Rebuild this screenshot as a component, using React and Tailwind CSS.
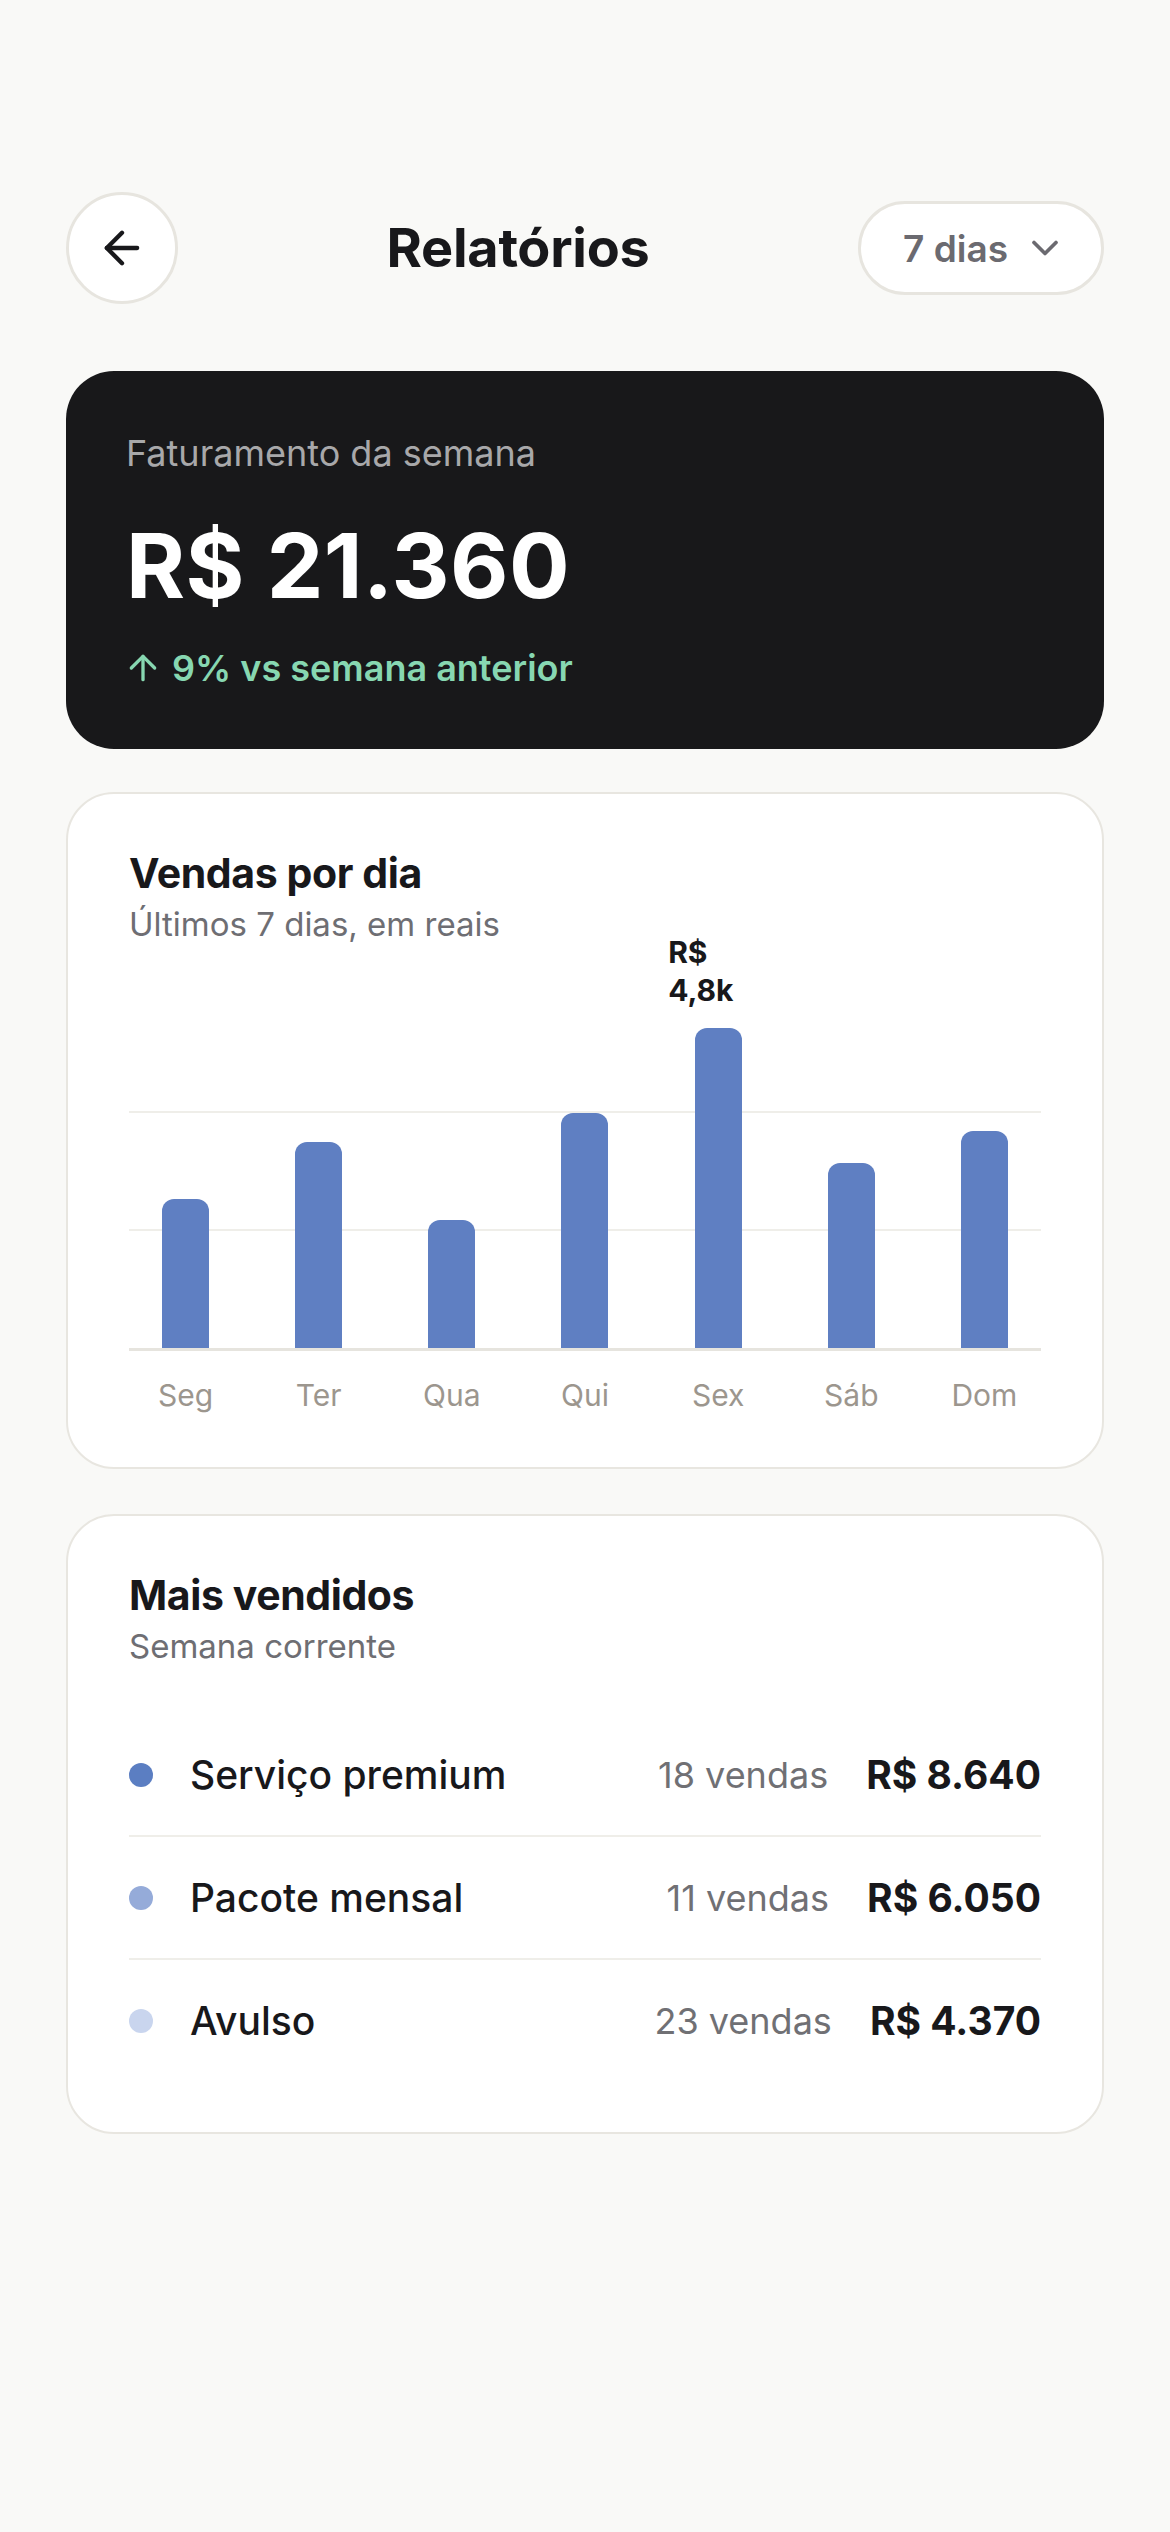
import React from "react";
import { ArrowLeft, ChevronDown, ArrowUp } from "lucide-react";

const bars = [
  { d: "Seg", h: 149 },
  { d: "Ter", h: 206 },
  { d: "Qua", h: 128 },
  { d: "Qui", h: 235 },
  { d: "Sex", h: 320, label: "R$ 4,8k" },
  { d: "Sáb", h: 185 },
  { d: "Dom", h: 217 },
];

const items = [
  { name: "Serviço premium", sales: "18 vendas", price: "R$ 8.640", color: "bg-[#5b7ec2]" },
  { name: "Pacote mensal", sales: "11 vendas", price: "R$ 6.050", color: "bg-[#95abd9]" },
  { name: "Avulso", sales: "23 vendas", price: "R$ 4.370", color: "bg-[#c9d5ee]" },
];

export default function App() {
  return (
    <div className="min-h-[2532px] w-full bg-[#f9f9f7] px-[66px] pt-[192px] font-['Inter',sans-serif] text-[#18181b]">
      {/* Header */}
      <div className="flex items-center justify-between">
        <button className="flex h-[112px] w-[112px] items-center justify-center rounded-full border-[3px] border-[#e7e5df] bg-white">
          <ArrowLeft size={52} strokeWidth={2} color="#18181b" />
        </button>
        <h1 className="text-[54px] font-bold leading-none tracking-[-0.005em]">Relatórios</h1>
        <button className="flex h-[94px] items-center gap-[15px] rounded-full border-[3px] border-[#e7e5df] bg-white pl-[42px] pr-[34px]">
          <span className="text-[37px] font-semibold leading-none text-[#6b6a70]">7 dias</span>
          <ChevronDown size={44} strokeWidth={2} color="#6b6a70" />
        </button>
      </div>

      <div className="mt-[67px] flex flex-col">
        {/* Dark revenue card */}
        <div className="rounded-[48px] bg-[#18181a] pl-[60px] pr-[60px] pt-[64px] pb-[61px]">
          <p className="text-[36px] leading-none text-[#a8a8aa]">Faturamento da semana</p>
          <p className="mt-[50px] text-[90px] font-bold leading-none tracking-[0.005em] text-white">R$ 21.360</p>
          <div className="mt-[37px] flex items-center gap-[9px] text-[#87d7b1]">
            <ArrowUp size={40} strokeWidth={2} color="#87d7b1" className="-ml-[3px]" />
            <span className="text-[36px] font-semibold leading-none">9% vs semana anterior</span>
          </div>
        </div>

        {/* Sales per day card */}
        <div className="mt-[43px] rounded-[48px] border-2 border-[#e8e6e0] bg-white px-[61px] pt-[59px] pb-[57px]">
          <h2 className="text-[41px] font-bold leading-none tracking-[-0.01em]">Vendas por dia</h2>
          <p className="mt-[14px] text-[33px] leading-none text-[#6e6e73]">Últimos 7 dias, em reais</p>

          <div className="relative mt-[51px] h-[359px] border-b-[3px] border-[#e6e4de]">
            <div className="absolute inset-x-0 top-[119px] h-[2px] bg-[#efeee9]" />
            <div className="absolute inset-x-0 top-[237px] h-[2px] bg-[#efeee9]" />
            <div className="relative grid h-full grid-cols-7 gap-[20px]">
              {bars.map((b) => (
                <div key={b.d} className="relative flex flex-col items-center justify-end">
                  {b.label && (
                    <div
                      className="absolute left-1/2 w-[100px] -translate-x-1/2 text-left text-[30px] font-bold leading-[38px] text-[#18181b]"
                      style={{ bottom: b.h + 19 }}
                    >
                      {b.label}
                    </div>
                  )}
                  <div className="w-[47px] rounded-t-[12px] bg-[#5f7fc2]" style={{ height: b.h }} />
                </div>
              ))}
            </div>
          </div>
          <div className="mt-[29px] grid grid-cols-7 gap-[20px]">
            {bars.map((b) => (
              <span key={b.d} className="text-center text-[30px] leading-none text-[#9c968e]">
                {b.d}
              </span>
            ))}
          </div>
        </div>

        {/* Best sellers card */}
        <div className="mt-[45px] rounded-[48px] border-2 border-[#e8e6e0] bg-white px-[61px] pt-[59px] pb-[51px]">
          <h2 className="text-[41px] font-bold leading-none tracking-[-0.01em]">Mais vendidos</h2>
          <p className="mt-[14px] text-[33px] leading-none text-[#6e6e73]">Semana corrente</p>
          <div className="mt-[51px] flex flex-col">
            {items.map((it, i) => (
              <div
                key={it.name}
                className={
                  "flex items-center py-[41px] " + (i < items.length - 1 ? "border-b-2 border-[#efeee9]" : "")
                }
              >
                <span className={"h-[24px] w-[24px] shrink-0 rounded-full " + it.color} />
                <span className="ml-[37px] flex-1 text-[39px] font-medium leading-none">{it.name}</span>
                <span className="text-[36px] leading-none text-[#707074]">{it.sales}</span>
                <span className="ml-[38px] text-[39px] font-bold leading-none">{it.price}</span>
              </div>
            ))}
          </div>
        </div>
      </div>
    </div>
  );
}
